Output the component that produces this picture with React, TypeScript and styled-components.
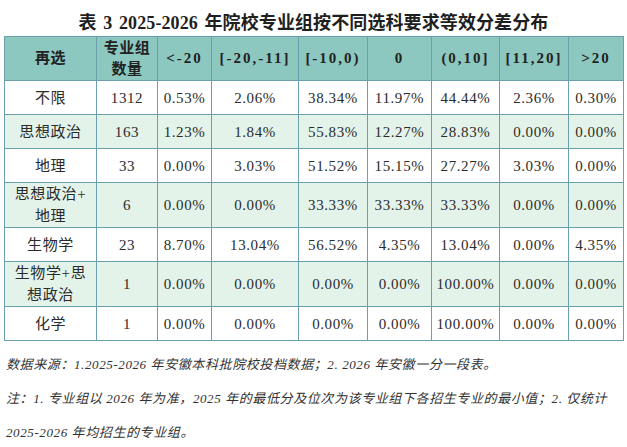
import { createGlobalStyle } from 'styled-components'
import styled from 'styled-components'

const GlobalStyle = createGlobalStyle`
  html, body {
    margin: 0;
    padding: 0;
    background: #ffffff;
  }
  body {
    font-family: "Liberation Serif", "Noto Sans CJK SC", serif;
    color: #2b2b2b;
  }
`

const Page = styled.div`
  width: 627px;
  height: 447px;
  box-sizing: border-box;
  padding: 11px 4px 0 4px;
  overflow: hidden;
`

const Title = styled.h1`
  margin: 0 0 1px;
  font-size: 18px;
  line-height: 24px;
  font-weight: 700;
  letter-spacing: 0.1px;
  word-spacing: 2px;
  text-align: center;
  color: #1f1f1f;
  white-space: nowrap;
`

const Table = styled.table`
  width: 619px;
  border-collapse: collapse;
  table-layout: fixed;
  border: 1px solid #6a9fae;
`

const HeadCell = styled.th<{ $ascii?: boolean }>`
  background: #8cc8bf;
  border: 1px solid #6a9fae;
  height: 43px;
  padding: 0 1px;
  font-size: 15px;
  line-height: 21px;
  font-weight: 700;
  text-align: center;
  color: #222;
  letter-spacing: ${p => (p.$ascii ? '2px' : '0.5px')};
  white-space: nowrap;
`

const Row = styled.tr<{ $shade: boolean }>`
  background: ${p => (p.$shade ? '#e3f3ea' : '#ffffff')};
`

const Cell = styled.td`
  border: 1px solid #6a9fae;
  height: 33px;
  padding: 0 1px;
  font-size: 15px;
  line-height: 22px;
  letter-spacing: 0.6px;
  text-align: center;
  color: #2b2b2b;
`

const Notes = styled.div`
  margin-top: 7px;
  padding-left: 2px;
  font-style: italic;
  font-size: 13px;
  line-height: 34px;
  letter-spacing: 0.6px;
  color: #333;
  white-space: nowrap;
`

const COLS = [92, 61, 54, 87, 69, 64, 68, 69, 55]

const HEADERS: { label: React.ReactNode; ascii?: boolean }[] = [
  { label: '再选' },
  { label: <>专业组<br />数量</> },
  { label: '<-20', ascii: true },
  { label: '[-20,-11]', ascii: true },
  { label: '[-10,0)', ascii: true },
  { label: '0', ascii: true },
  { label: '(0,10]', ascii: true },
  { label: '[11,20]', ascii: true },
  { label: '>20', ascii: true },
]

type Line = { name: React.ReactNode; count: string; values: string[] }

const ROWS: Line[] = [
  { name: '不限', count: '1312', values: ['0.53%', '2.06%', '38.34%', '11.97%', '44.44%', '2.36%', '0.30%'] },
  { name: '思想政治', count: '163', values: ['1.23%', '1.84%', '55.83%', '12.27%', '28.83%', '0.00%', '0.00%'] },
  { name: '地理', count: '33', values: ['0.00%', '3.03%', '51.52%', '15.15%', '27.27%', '3.03%', '0.00%'] },
  { name: <>思想政治+<br />地理</>, count: '6', values: ['0.00%', '0.00%', '33.33%', '33.33%', '33.33%', '0.00%', '0.00%'] },
  { name: '生物学', count: '23', values: ['8.70%', '13.04%', '56.52%', '4.35%', '13.04%', '0.00%', '4.35%'] },
  { name: <>生物学+思<br />想政治</>, count: '1', values: ['0.00%', '0.00%', '0.00%', '0.00%', '100.00%', '0.00%', '0.00%'] },
  { name: '化学', count: '1', values: ['0.00%', '0.00%', '0.00%', '0.00%', '100.00%', '0.00%', '0.00%'] },
]

export default function App() {
  return (
    <>
      <GlobalStyle />
      <Page>
        <Title>表 3 2025-2026 年院校专业组按不同选科要求等效分差分布</Title>
        <Table>
          <colgroup>
            {COLS.map((w, i) => (
              <col key={i} style={{ width: w }} />
            ))}
          </colgroup>
          <thead>
            <tr>
              {HEADERS.map((h, i) => (
                <HeadCell key={i} $ascii={h.ascii}>{h.label}</HeadCell>
              ))}
            </tr>
          </thead>
          <tbody>
            {ROWS.map((r, i) => (
              <Row key={i} $shade={i % 2 === 1}>
                <Cell>{r.name}</Cell>
                <Cell>{r.count}</Cell>
                {r.values.map((v, j) => (
                  <Cell key={j}>{v}</Cell>
                ))}
              </Row>
            ))}
          </tbody>
        </Table>
        <Notes>
          数据来源：1.2025-2026 年安徽本科批院校投档数据；2. 2026 年安徽一分一段表。
          <br />
          注：1. 专业组以 2026 年为准，2025 年的最低分及位次为该专业组下各招生专业的最小值；2. 仅统计
          <br />
          2025-2026 年均招生的专业组。
        </Notes>
      </Page>
    </>
  )
}
